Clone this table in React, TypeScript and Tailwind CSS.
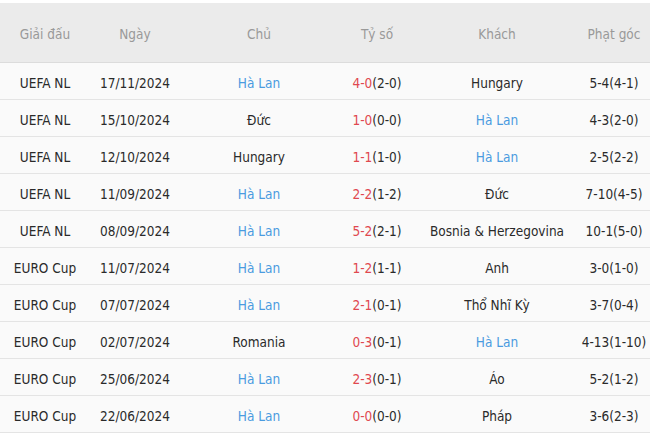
const rows = [
  ['UEFA NL', '17/11/2024', 'Hà Lan', '4-0', '(2-0)', 'Hungary', '5-4(4-1)', 'home'],
  ['UEFA NL', '15/10/2024', 'Đức', '1-0', '(0-0)', 'Hà Lan', '4-3(2-0)', 'away'],
  ['UEFA NL', '12/10/2024', 'Hungary', '1-1', '(1-0)', 'Hà Lan', '2-5(2-2)', 'away'],
  ['UEFA NL', '11/09/2024', 'Hà Lan', '2-2', '(1-2)', 'Đức', '7-10(4-5)', 'home'],
  ['UEFA NL', '08/09/2024', 'Hà Lan', '5-2', '(2-1)', 'Bosnia & Herzegovina', '10-1(5-0)', 'home'],
  ['EURO Cup', '11/07/2024', 'Hà Lan', '1-2', '(1-1)', 'Anh', '3-0(1-0)', 'home'],
  ['EURO Cup', '07/07/2024', 'Hà Lan', '2-1', '(0-1)', 'Thổ Nhĩ Kỳ', '3-7(0-4)', 'home'],
  ['EURO Cup', '02/07/2024', 'Romania', '0-3', '(0-1)', 'Hà Lan', '4-13(1-10)', 'away'],
  ['EURO Cup', '25/06/2024', 'Hà Lan', '2-3', '(0-1)', 'Áo', '5-2(1-2)', 'home'],
  ['EURO Cup', '22/06/2024', 'Hà Lan', '0-0', '(0-0)', 'Pháp', '3-6(2-3)', 'home'],
]

const cols = 'grid grid-cols-[90px_90px_158px_78px_162px_72px]'

export default function App() {
  return (
    <div className="w-[650px] h-[439px] bg-white pt-[3px] text-[13.5px] font-['DejaVu_Sans_Condensed','DejaVu_Sans',sans-serif]">
      {/* Header */}
      <div className={cols + ' h-[60px] pt-[4px] items-center bg-[#ebebeb] border-b border-[#dcdcdc] text-[#999999]'}>
        <div className="text-center">Giải đấu</div>
        <div className="text-center">Ngày</div>
        <div className="text-center">Chủ</div>
        <div className="text-center">Tỷ số</div>
        <div className="text-center">Khách</div>
        <div className="text-center">Phạt góc</div>
      </div>

      {rows.map(r => (
        <div key={r[1]} className={cols + ' h-[37px] pt-[4px] items-center bg-[#fafafa] border-b border-[#e4e4e4] text-[#2a2a2a]'}>
          <div className="text-center">{r[0]}</div>
          <div className="text-center">{r[1]}</div>
          <div className={r[7] === 'home' ? 'text-center text-[#4a9be0]' : 'text-center'}>{r[2]}</div>
          <div className="text-center">
            <span className="text-[#e0484f]">{r[3]}</span>
            {r[4]}
          </div>
          <div className={r[7] === 'away' ? 'text-center text-[#4a9be0]' : 'text-center'}>{r[5]}</div>
          <div className="text-center">{r[6]}</div>
        </div>
      ))}
    </div>
  )
}
